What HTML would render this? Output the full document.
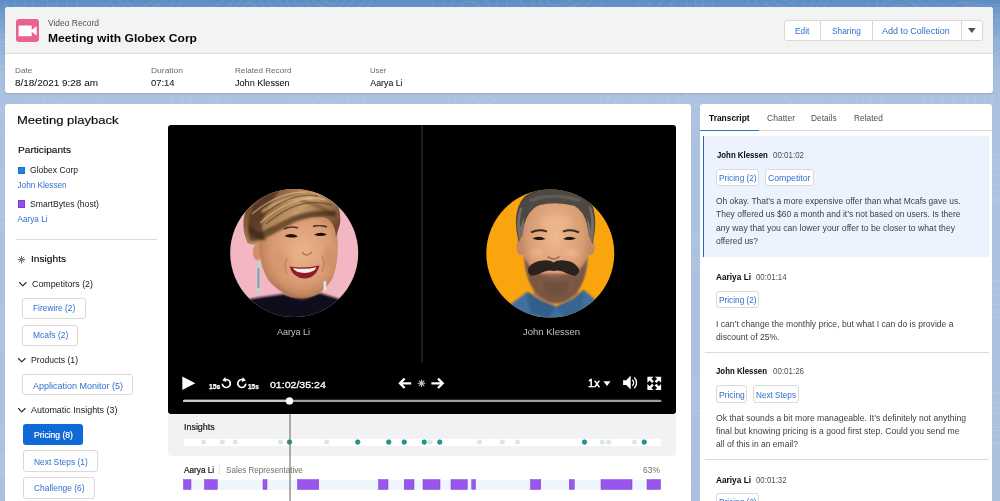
<!DOCTYPE html>
<html lang="en">
<head>
<meta charset="utf-8">
<title>Meeting with Globex Corp</title>
<style>
*{box-sizing:border-box;margin:0;padding:0}
html,body{width:1000px;height:501px;overflow:hidden}
body{position:relative;font-family:"Liberation Sans",sans-serif;background:linear-gradient(to bottom,#5d8cc1 0px,#6f9acc 12px,#8fb0d8 40px,#a6bedf 75px,#adc2e0 105px,#adc1df 100%)}
.abs,.t{position:absolute}
.t{white-space:pre;display:block;transform-origin:0 50%}
.card{position:absolute;background:#fff;border-radius:3px}
.btn{position:absolute;background:#fff;border:1px solid #dbd9d7;border-radius:3px}
.tag{position:absolute;background:#fff;border:1px solid #dbd9d7;border-radius:3px}
.hr{position:absolute;height:1px;background:#dddbda}
svg{position:absolute;overflow:visible}
</style>
</head>
<body>
<svg style="left:0;top:0" width="1000" height="501"><path d="M48.0 4.0Q47.5 5.7 46.4 7.1Q45.1 8.3 43.4 9.0Q41.8 10.1 40.0 10.5Q37.8 10.9 35.5 10.5Q34.6 8.8 34.2 6.8Q33.3 5.5 32.8 4.0Q32.8 2.3 33.2 0.7Q34.3 -0.9 35.8 -2.1Q37.9 -2.6 40.0 -2.4Q41.7 -1.8 43.1 -0.6Q45.4 -0.5 47.4 0.4Q48.0 2.1 48.0 4.0M57.1 4.0Q55.9 7.2 53.7 9.9Q50.8 12.2 47.3 13.4Q43.9 15.4 40.0 16.2Q35.2 17.0 30.5 16.3Q28.5 13.0 27.6 9.3Q25.7 6.9 24.5 4.0Q24.5 0.8 25.5 -2.2Q27.9 -5.3 31.0 -7.5Q35.5 -8.5 40.0 -8.0Q43.6 -6.9 46.7 -4.7Q51.4 -4.5 55.8 -2.8Q57.0 0.5 57.1 4.0M67.8 4.0Q65.7 8.5 62.3 12.1Q57.5 15.4 51.9 17.0Q46.3 19.9 40.0 20.9Q32.3 22.1 24.5 20.9Q21.4 16.5 19.9 11.3Q16.8 8.1 14.9 4.0Q15.0 -0.4 16.5 -4.6Q20.4 -8.9 25.5 -11.9Q32.7 -13.3 40.0 -12.5Q45.8 -11.1 51.0 -8.0Q58.6 -7.8 65.7 -5.4Q67.5 -0.8 67.8 4.0M77.9 4.0Q75.0 10.1 70.4 15.0Q63.8 19.5 56.2 21.6Q48.5 25.6 40.0 26.9Q29.5 28.6 18.9 26.9Q14.7 20.9 12.6 13.9Q8.4 9.5 5.8 4.0Q6.0 -2.0 8.0 -7.6Q13.3 -13.5 20.2 -17.5Q30.0 -19.5 40.0 -18.4Q48.0 -16.5 54.9 -12.2Q65.3 -12.1 75.0 -8.7Q77.5 -2.6 77.9 4.0M147.3 -6.0Q146.8 -4.8 146.0 -3.7Q144.7 -2.8 143.2 -2.3Q141.8 -1.2 140.0 -0.5Q138.0 -0.8 136.2 -1.7Q135.2 -2.7 134.5 -3.9Q133.4 -4.8 132.7 -6.0Q132.9 -7.3 133.4 -8.5Q134.5 -9.7 135.9 -10.6Q138.0 -10.6 140.0 -10.0Q141.8 -10.3 143.5 -10.0Q145.4 -9.6 147.1 -8.7Q147.4 -7.4 147.3 -6.0M157.6 -6.0Q156.7 -2.7 154.7 0.2Q151.6 2.6 147.8 3.9Q144.3 7.1 140.0 9.0Q135.2 8.1 130.8 5.6Q128.3 3.0 126.7 -0.4Q124.0 -2.8 122.2 -6.0Q122.6 -9.5 124.0 -12.8Q126.6 -16.1 130.1 -18.5Q135.2 -18.5 140.0 -16.9Q144.3 -17.6 148.5 -16.9Q153.2 -15.8 157.3 -13.3Q158.1 -9.7 157.6 -6.0M165.4 -6.0Q163.9 -1.5 161.2 2.2Q156.6 5.5 151.3 7.2Q146.2 11.4 140.0 13.9Q133.1 12.7 126.8 9.4Q123.2 5.9 120.8 1.5Q117.0 -1.8 114.4 -6.0Q115.0 -10.7 117.0 -14.9Q120.8 -19.5 125.8 -22.6Q133.1 -22.7 140.0 -20.5Q146.2 -21.4 152.3 -20.4Q159.0 -19.0 165.0 -15.7Q166.0 -10.9 165.4 -6.0M176.4 -6.0Q174.3 0.6 170.3 6.1Q163.8 10.9 156.1 13.4Q148.9 19.7 140.0 23.3Q130.0 21.5 121.1 16.7Q115.9 11.5 112.5 5.0Q107.1 0.2 103.4 -6.0Q104.2 -12.9 107.1 -19.2Q112.5 -25.8 119.6 -30.5Q130.1 -30.6 140.0 -27.4Q148.8 -28.7 157.6 -27.2Q167.2 -25.2 175.8 -20.3Q177.2 -13.2 176.4 -6.0M185.2 -6.0Q182.5 1.7 177.6 8.2Q169.5 13.9 160.0 16.7Q150.9 24.1 140.0 28.3Q127.7 26.3 116.6 20.6Q110.1 14.6 105.9 6.9Q99.2 1.4 94.5 -6.0Q95.6 -14.1 99.1 -21.5Q105.9 -29.3 114.7 -34.7Q127.7 -34.9 140.0 -31.0Q151.0 -32.7 161.9 -30.8Q173.8 -28.6 184.4 -22.8Q186.1 -14.5 185.2 -6.0M256.9 10.0Q257.4 12.0 257.3 14.1Q255.5 15.3 253.4 15.8Q251.8 16.5 250.0 16.7Q248.2 16.5 246.6 15.7Q244.7 15.2 242.9 14.0Q242.4 12.0 242.5 10.0Q243.4 8.3 244.8 7.1Q245.3 5.2 246.2 3.6Q248.0 2.8 250.0 2.6Q252.0 2.7 253.8 3.5Q254.9 5.1 255.4 6.9Q256.4 8.3 256.9 10.0M266.5 10.0Q267.4 13.1 267.4 16.4Q263.0 18.4 258.1 19.0Q254.2 20.3 250.0 20.4Q245.9 20.2 242.0 18.8Q237.4 18.2 233.2 16.2Q232.2 13.2 232.2 10.0Q234.6 7.3 237.7 5.5Q238.9 2.5 241.0 0.1Q245.4 -1.4 250.0 -1.5Q254.7 -1.5 259.1 -0.1Q261.4 2.3 262.9 5.3Q265.1 7.3 266.5 10.0M274.5 10.0Q276.0 15.0 275.8 20.2Q269.3 23.4 262.1 24.3Q256.2 26.4 250.0 26.5Q243.9 26.3 238.1 24.1Q231.2 23.0 225.0 19.9Q223.5 15.1 223.5 10.0Q227.0 5.7 231.7 2.8Q233.5 -1.9 236.6 -5.8Q243.1 -8.2 250.0 -8.3Q257.0 -8.3 263.6 -6.1Q267.0 -2.3 269.1 2.5Q272.4 5.8 274.5 10.0M285.8 10.0Q287.9 16.6 287.8 23.5Q278.2 27.8 267.7 29.0Q259.1 31.8 250.0 31.8Q241.0 31.6 232.6 28.6Q222.6 27.4 213.4 23.1Q211.3 16.7 211.3 10.0Q216.5 4.3 223.2 0.4Q225.9 -5.8 230.4 -11.0Q240.0 -14.2 250.0 -14.2Q260.2 -14.3 269.9 -11.3Q274.8 -6.3 278.0 0.0Q282.7 4.4 285.8 10.0M339.6 -2.0Q338.5 -0.6 337.1 0.4Q336.3 1.9 335.0 3.1Q332.6 4.2 330.0 4.4Q327.7 3.7 325.8 2.3Q323.8 1.8 322.0 0.7Q321.0 -0.5 320.5 -2.0Q320.3 -3.6 320.6 -5.2Q322.9 -6.3 325.5 -6.6Q327.7 -7.1 330.0 -6.8Q332.6 -7.6 335.4 -7.4Q337.2 -6.4 338.6 -4.9Q339.3 -3.5 339.6 -2.0M348.2 -2.0Q346.3 0.7 343.6 2.6Q342.0 5.5 339.6 7.8Q335.0 9.8 330.0 10.2Q325.7 8.8 322.0 6.1Q318.2 5.2 314.8 3.2Q312.9 0.8 311.8 -2.0Q311.5 -5.1 312.1 -8.1Q316.5 -10.2 321.4 -10.7Q325.7 -11.6 330.0 -11.2Q335.0 -12.6 340.2 -12.4Q343.6 -10.4 346.3 -7.5Q347.7 -4.9 348.2 -2.0M355.3 -2.0Q352.6 2.2 348.8 5.4Q346.8 10.0 343.3 13.7Q337.0 16.7 330.0 17.5Q323.9 15.2 318.9 11.0Q313.5 9.5 308.9 6.3Q306.2 2.5 304.8 -2.0Q304.2 -6.9 305.1 -11.7Q311.3 -14.9 318.1 -16.0Q324.0 -17.3 330.0 -16.7Q336.9 -18.8 344.1 -18.6Q349.0 -15.4 352.6 -10.9Q354.6 -6.6 355.3 -2.0M366.8 -2.0Q362.9 3.9 357.4 8.2Q354.3 14.6 349.4 19.8Q340.1 24.0 330.0 25.1Q321.2 21.9 313.8 16.1Q306.0 14.0 299.3 9.5Q295.4 4.2 293.3 -2.0Q292.5 -8.8 293.8 -15.5Q302.8 -20.0 312.7 -21.4Q321.3 -23.3 330.0 -22.4Q340.1 -25.4 350.6 -25.1Q357.6 -20.7 362.9 -14.3Q365.8 -8.5 366.8 -2.0M374.3 -2.0Q369.7 5.4 363.0 11.0Q359.4 19.1 353.4 25.7Q342.2 31.0 330.0 32.5Q319.3 28.3 310.5 21.1Q301.1 18.2 293.0 12.6Q288.2 5.9 285.8 -2.0Q284.7 -10.7 286.4 -19.2Q297.2 -24.8 309.1 -26.7Q319.5 -29.0 330.0 -28.0Q342.1 -31.7 354.8 -31.4Q363.3 -25.7 369.7 -17.7Q373.2 -10.2 374.3 -2.0M478.2 8.0Q477.7 9.7 476.7 11.3Q475.4 12.5 473.7 13.3Q472.1 15.0 470.0 16.1Q467.8 15.4 465.9 14.0Q464.6 12.7 463.7 11.0Q462.5 9.7 461.8 8.0Q461.9 6.1 462.5 4.4Q463.8 2.7 465.5 1.4Q467.8 1.5 470.0 2.3Q472.0 1.9 474.1 2.1Q476.2 2.8 477.9 4.1Q478.4 6.1 478.2 8.0M488.7 8.0Q487.5 10.9 485.4 13.3Q482.2 15.6 478.4 16.7Q474.6 19.6 470.0 21.2Q465.0 20.2 460.6 17.8Q457.7 15.7 455.7 12.9Q453.0 10.8 451.1 8.0Q451.5 4.9 452.9 2.1Q455.9 -0.9 459.6 -2.7Q464.9 -2.8 470.0 -1.3Q474.6 -2.2 479.4 -1.7Q484.1 -0.7 488.2 1.7Q489.0 4.8 488.7 8.0M497.2 8.0Q495.5 12.7 492.4 16.6Q487.8 20.1 482.2 22.0Q476.7 26.6 470.0 29.2Q462.7 27.6 456.3 23.7Q452.1 20.4 449.2 16.0Q445.3 12.5 442.6 8.0Q443.1 3.0 445.1 -1.5Q449.4 -6.2 454.9 -9.3Q462.6 -9.3 470.0 -7.0Q476.7 -8.4 483.6 -7.6Q490.5 -5.9 496.5 -2.1Q497.6 2.9 497.2 8.0M507.3 8.0Q505.0 14.4 500.8 19.7Q494.4 24.5 486.8 27.1Q479.2 33.4 470.0 37.0Q460.0 34.7 451.2 29.5Q445.4 25.0 441.4 18.9Q436.0 14.2 432.3 8.0Q433.1 1.2 435.8 -5.0Q441.7 -11.4 449.3 -15.6Q459.9 -15.7 470.0 -12.4Q479.3 -14.3 488.7 -13.3Q498.1 -11.0 506.4 -5.8Q508.0 1.0 507.3 8.0M571.8 -8.0Q570.7 -6.6 569.2 -5.6Q567.2 -4.6 565.0 -4.1Q562.6 -3.3 560.0 -3.3Q556.8 -2.6 553.5 -3.0Q552.2 -4.2 551.4 -5.8Q550.5 -6.8 550.0 -8.0Q549.9 -9.3 550.2 -10.5Q552.0 -11.8 554.1 -12.5Q557.0 -13.2 560.0 -13.0Q562.3 -12.6 564.4 -11.4Q567.4 -11.5 570.3 -10.6Q571.3 -9.4 571.8 -8.0M579.2 -8.0Q577.5 -4.6 574.8 -1.8Q571.8 0.7 568.1 2.2Q564.2 3.9 560.0 4.3Q554.8 5.6 549.5 5.1Q547.2 1.8 546.0 -2.2Q544.5 -4.9 543.8 -8.0Q543.5 -11.3 544.2 -14.6Q546.9 -17.8 550.5 -19.9Q555.1 -21.3 560.0 -21.2Q563.9 -19.7 567.2 -17.0Q572.1 -16.7 576.6 -14.9Q578.5 -11.7 579.2 -8.0M587.8 -8.0Q585.3 -3.1 581.5 0.7Q577.1 4.3 571.8 6.3Q566.1 8.8 560.0 9.4Q552.5 11.1 544.8 10.5Q541.5 5.7 539.8 0.2Q537.5 -3.6 536.6 -8.0Q536.1 -12.7 537.1 -17.3Q541.1 -21.8 546.2 -24.8Q553.0 -26.8 560.0 -26.6Q565.7 -24.5 570.4 -20.7Q577.5 -20.3 584.1 -17.8Q586.7 -13.2 587.8 -8.0M597.0 -8.0Q593.8 -1.4 588.6 3.9Q582.8 8.7 575.7 11.6Q568.2 14.9 560.0 15.7Q550.0 18.0 539.7 17.2Q535.2 10.7 533.0 3.2Q530.0 -2.1 528.7 -8.0Q528.1 -14.4 529.5 -20.6Q534.7 -26.7 541.6 -30.9Q550.6 -33.6 560.0 -33.3Q567.6 -30.4 573.9 -25.3Q583.3 -24.8 592.2 -21.3Q595.7 -15.1 597.0 -8.0M610.0 -8.0Q605.5 0.2 598.6 6.6Q590.7 12.8 581.2 16.1Q571.0 20.3 560.0 21.2Q546.5 24.3 532.7 23.1Q526.7 15.2 523.6 5.8Q519.6 -0.6 517.8 -8.0Q517.1 -15.9 518.9 -23.6Q526.0 -31.2 535.2 -36.2Q547.3 -39.7 560.0 -39.2Q570.2 -35.8 578.7 -29.3Q591.4 -28.8 603.4 -24.4Q608.0 -16.7 610.0 -8.0M687.0 4.0Q687.9 5.8 688.2 7.8Q686.4 9.2 684.3 10.0Q682.2 10.4 680.0 10.0Q678.0 10.0 676.1 9.4Q674.2 8.7 672.7 7.4Q671.3 5.9 670.5 4.0Q672.0 2.3 673.9 1.2Q674.8 -0.3 676.1 -1.4Q677.9 -2.6 680.0 -3.1Q682.3 -2.9 684.3 -2.0Q685.9 -0.8 687.0 0.8Q687.2 2.4 687.0 4.0M695.5 4.0Q697.4 7.3 698.2 11.0Q694.3 13.8 689.6 15.1Q684.8 15.9 680.0 15.2Q675.5 15.3 671.3 14.1Q667.2 12.8 663.7 10.3Q660.7 7.5 658.8 4.0Q662.2 0.8 666.4 -1.2Q668.4 -4.0 671.3 -6.1Q675.4 -8.4 680.0 -9.3Q685.0 -9.0 689.6 -7.1Q693.0 -5.0 695.5 -2.0Q696.0 1.0 695.5 4.0M702.7 4.0Q705.5 9.1 706.6 14.9Q700.9 19.1 694.1 21.3Q687.0 22.5 680.0 21.4Q673.5 21.5 667.3 19.7Q661.3 17.6 656.2 13.7Q651.8 9.4 649.0 4.0Q653.9 -1.0 660.1 -4.1Q663.1 -8.5 667.3 -11.7Q673.2 -15.2 680.0 -16.6Q687.3 -16.1 694.1 -13.3Q699.0 -10.0 702.7 -5.3Q703.4 -0.6 702.7 4.0M711.9 4.0Q715.8 10.4 717.5 17.7Q709.3 23.1 699.8 25.7Q689.9 27.4 680.0 25.9Q670.8 26.2 662.1 23.7Q653.7 21.2 646.5 16.3Q640.5 10.9 636.4 4.0Q643.4 -2.4 652.0 -6.2Q656.3 -11.8 662.1 -15.7Q670.5 -20.3 680.0 -22.0Q690.3 -21.4 699.8 -17.8Q706.7 -13.7 711.9 -7.7Q712.9 -1.8 711.9 4.0M796.9 -4.0Q796.4 -2.4 795.4 -1.1Q795.1 0.9 794.2 2.6Q792.1 3.1 790.0 2.8Q788.2 2.2 786.8 1.1Q785.2 0.4 783.9 -0.8Q782.9 -2.3 782.5 -4.0Q782.4 -5.9 782.9 -7.7Q784.8 -8.6 787.0 -8.8Q788.4 -9.8 790.0 -10.4Q792.0 -10.7 794.0 -10.3Q795.5 -9.0 796.4 -7.4Q797.0 -5.7 796.9 -4.0M807.8 -4.0Q806.4 -0.8 804.0 1.9Q803.0 6.0 800.8 9.6Q795.4 10.6 790.0 9.9Q785.6 8.8 781.7 6.4Q777.7 5.1 774.3 2.6Q771.9 -0.4 770.6 -4.0Q770.6 -7.9 771.8 -11.6Q776.8 -13.5 782.2 -13.8Q785.8 -16.1 790.0 -17.1Q795.2 -17.8 800.3 -16.9Q803.9 -14.4 806.5 -10.9Q807.7 -7.6 807.8 -4.0M817.1 -4.0Q814.8 0.2 811.3 3.5Q809.6 8.9 806.4 13.5Q798.3 15.0 790.0 13.9Q783.3 12.7 777.3 9.4Q771.3 7.9 766.1 4.5Q762.7 0.7 760.6 -4.0Q760.6 -9.0 762.3 -13.8Q770.0 -16.5 778.1 -16.6Q783.7 -19.7 790.0 -20.8Q797.8 -22.0 805.6 -20.6Q811.0 -17.5 815.1 -12.9Q816.8 -8.6 817.1 -4.0M824.1 -4.0Q821.3 1.9 816.7 6.6Q814.8 14.1 810.7 20.7Q800.4 22.6 790.0 21.2Q781.6 19.4 774.1 15.0Q766.5 12.6 760.0 8.0Q755.5 2.5 753.0 -4.0Q753.0 -11.1 755.2 -17.9Q764.8 -21.4 775.1 -21.8Q782.1 -26.0 790.0 -27.8Q799.8 -29.2 809.6 -27.5Q816.5 -23.0 821.5 -16.6Q823.8 -10.5 824.1 -4.0M831.3 -4.0Q827.9 3.2 822.4 9.0Q820.1 18.1 815.0 26.1Q802.6 28.4 790.0 26.8Q779.8 24.5 770.7 19.2Q761.5 16.2 753.6 10.6Q748.2 4.0 745.1 -4.0Q745.1 -12.7 747.8 -20.9Q759.5 -25.2 771.9 -25.7Q780.4 -30.8 790.0 -33.0Q801.9 -34.7 813.8 -32.6Q822.1 -27.1 828.2 -19.3Q831.0 -11.9 831.3 -4.0M908.7 10.0Q907.7 11.3 906.4 12.3Q905.1 13.3 903.6 13.9Q901.8 14.3 900.0 14.2Q898.0 14.7 895.9 14.5Q894.2 13.8 892.9 12.6Q893.1 11.2 893.8 10.0Q893.4 8.8 893.5 7.6Q894.6 6.5 896.1 5.8Q898.0 5.0 900.0 4.9Q901.8 5.4 903.3 6.4Q904.7 6.9 905.9 7.9Q907.5 8.7 908.7 10.0M922.2 10.0Q919.7 13.2 916.3 15.4Q913.0 17.8 909.1 19.0Q904.6 20.2 900.0 19.9Q894.8 21.0 889.5 20.4Q885.3 18.8 881.9 16.0Q882.5 12.8 884.1 10.0Q883.2 7.3 883.3 4.5Q886.3 1.8 890.1 0.2Q894.9 -1.7 900.0 -1.9Q904.5 -0.9 908.5 1.6Q912.0 2.8 915.0 5.1Q919.0 7.0 922.2 10.0M930.3 10.0Q927.0 15.0 922.3 18.7Q917.8 22.5 912.4 24.6Q906.3 26.3 900.0 26.0Q892.9 27.6 885.6 26.9Q879.9 24.1 875.4 19.7Q876.1 14.6 878.3 10.0Q877.1 5.6 877.2 1.1Q881.3 -3.2 886.4 -6.0Q893.0 -8.7 900.0 -9.4Q906.3 -7.5 911.6 -3.7Q916.5 -1.6 920.4 2.0Q926.0 5.2 930.3 10.0M943.7 10.0Q938.8 16.5 932.1 21.2Q925.6 26.2 917.9 28.8Q909.1 31.1 900.0 30.6Q889.7 32.8 879.3 31.8Q871.1 28.3 864.5 22.4Q865.6 15.9 868.7 10.0Q867.0 4.4 867.2 -1.5Q873.1 -7.1 880.4 -10.5Q889.9 -14.3 900.0 -14.9Q909.0 -12.6 916.8 -7.6Q923.7 -5.0 929.4 -0.3Q937.4 3.7 943.7 10.0M994.2 30.0Q993.6 31.8 992.6 33.4Q991.0 34.7 989.1 35.5Q987.3 37.3 985.0 38.4Q982.5 37.7 980.4 36.3Q978.9 34.9 978.0 33.1Q976.6 31.7 975.8 30.0Q975.9 28.1 976.6 26.2Q978.0 24.4 979.9 23.1Q982.5 23.2 985.0 24.1Q987.3 23.6 989.6 23.9Q991.9 24.6 993.9 26.0Q994.4 28.0 994.2 30.0M1004.2 30.0Q1003.0 33.4 1000.9 36.2Q997.5 38.8 993.6 40.1Q989.7 43.4 985.0 45.3Q979.8 44.2 975.3 41.5Q972.3 39.0 970.3 35.7Q967.5 33.2 965.6 30.0Q966.0 26.4 967.5 23.1Q970.4 19.7 974.3 17.4Q979.8 17.4 985.0 19.1Q989.7 18.2 994.5 18.8Q999.4 20.0 1003.7 22.7Q1004.6 26.3 1004.2 30.0M1011.0 30.0Q1009.4 34.6 1006.5 38.4Q1002.0 41.9 996.7 43.7Q991.4 48.2 985.0 50.8Q978.0 49.2 971.8 45.5Q967.9 42.2 965.1 37.8Q961.3 34.4 958.8 30.0Q959.3 25.1 961.3 20.7Q965.3 16.1 970.5 13.0Q978.0 13.0 985.0 15.3Q991.4 14.0 997.9 14.8Q1004.6 16.4 1010.4 20.0Q1011.5 25.0 1011.0 30.0M1020.3 30.0Q1018.2 36.5 1014.2 42.0Q1008.1 46.8 1000.8 49.4Q993.7 55.7 985.0 59.4Q975.5 57.1 967.1 52.0Q961.7 47.2 958.1 41.0Q952.9 36.2 949.4 30.0Q950.1 23.1 952.8 16.8Q958.2 10.3 965.4 5.9Q975.4 5.9 985.0 9.1Q993.7 7.4 1002.5 8.4Q1011.6 10.8 1019.4 15.9Q1021.0 22.9 1020.3 30.0M1031.6 30.0Q1028.7 37.5 1023.5 43.8Q1015.4 49.5 1005.9 52.4Q996.4 59.8 985.0 63.9Q972.5 61.5 961.3 55.3Q954.4 50.0 949.4 42.7Q942.7 37.3 938.0 30.0Q939.0 22.0 942.4 14.8Q949.7 7.2 959.1 2.2Q972.3 2.0 985.0 6.0Q996.5 3.7 1008.2 5.2Q1020.0 7.7 1030.5 13.8Q1032.4 21.8 1031.6 30.0M69.2 98.0Q68.2 99.5 66.8 100.6Q65.4 101.7 63.8 102.3Q61.9 102.8 60.0 102.7Q57.8 103.2 55.6 103.0Q53.9 102.2 52.6 100.8Q52.7 99.3 53.4 98.0Q53.0 96.7 53.0 95.4Q54.3 94.1 55.9 93.3Q57.9 92.5 60.0 92.3Q61.9 92.9 63.5 94.0Q65.0 94.6 66.3 95.6Q68.0 96.6 69.2 98.0M80.9 98.0Q78.6 101.5 75.3 104.0Q72.3 106.6 68.6 108.2Q64.4 109.3 60.0 109.1Q55.1 110.3 50.0 109.9Q46.2 107.8 43.2 104.6Q43.6 101.2 45.0 98.0Q44.1 94.9 44.2 91.8Q47.0 88.8 50.6 86.9Q55.1 85.0 60.0 84.6Q64.3 85.9 67.9 88.6Q71.4 90.0 74.3 92.4Q78.0 94.7 80.9 98.0M90.3 98.0Q86.9 102.7 82.2 106.1Q77.8 109.7 72.5 111.7Q66.3 113.3 60.0 112.9Q52.8 114.6 45.5 114.0Q40.0 111.2 35.6 106.9Q36.2 102.3 38.2 98.0Q37.0 93.9 37.1 89.6Q41.2 85.6 46.4 83.1Q53.0 80.4 60.0 79.9Q66.2 81.7 71.5 85.4Q76.5 87.1 80.7 90.4Q86.1 93.4 90.3 98.0M101.5 98.0Q96.9 104.7 90.4 109.6Q84.4 114.7 77.1 117.6Q68.7 119.8 60.0 119.3Q50.2 121.7 40.1 120.8Q32.5 116.9 26.6 110.8Q27.4 104.1 30.2 98.0Q28.4 92.1 28.6 86.0Q34.3 80.3 41.4 76.7Q50.3 72.9 60.0 72.1Q68.5 74.8 75.8 79.9Q82.7 82.5 88.4 87.2Q95.8 91.5 101.5 98.0M210.8 100.0Q209.7 101.6 208.1 102.9Q207.1 104.6 205.6 105.9Q202.9 107.2 200.0 107.6Q197.4 106.7 195.2 105.0Q193.0 104.4 191.0 103.1Q189.9 101.7 189.2 100.0Q189.0 98.1 189.4 96.3Q191.9 95.0 194.8 94.5Q197.4 94.1 200.0 94.5Q202.9 93.6 206.0 93.7Q208.1 94.8 209.8 96.6Q210.6 98.2 210.8 100.0M218.1 100.0Q216.3 103.0 213.6 105.4Q211.9 108.6 209.3 111.1Q204.9 113.4 200.0 114.3Q195.6 112.5 192.0 109.5Q188.2 108.3 185.0 105.9Q183.0 103.2 182.0 100.0Q181.6 96.5 182.3 93.0Q186.5 90.6 191.3 89.7Q195.6 88.9 200.0 89.6Q204.9 88.0 210.1 88.1Q213.6 90.3 216.3 93.6Q217.7 96.6 218.1 100.0M227.8 100.0Q224.9 104.2 220.9 107.2Q218.2 111.6 214.3 114.9Q207.5 118.2 200.0 119.3Q193.4 117.0 187.7 112.8Q182.0 111.2 177.0 108.0Q174.1 104.4 172.4 100.0Q171.9 95.3 172.9 90.6Q179.4 87.2 186.6 86.1Q193.3 84.9 200.0 86.0Q207.6 83.7 215.4 83.9Q220.8 86.9 225.0 91.3Q227.1 95.4 227.8 100.0M338.7 96.0Q339.8 98.0 340.2 100.1Q337.9 101.6 335.2 102.3Q332.6 102.8 330.0 102.6Q327.6 102.6 325.2 101.8Q322.8 101.1 320.8 99.7Q319.3 98.1 318.5 96.0Q320.3 94.2 322.7 93.0Q323.6 91.3 325.0 90.0Q327.4 88.7 330.0 88.3Q332.8 88.5 335.3 89.5Q337.1 90.8 338.3 92.6Q338.8 94.3 338.7 96.0M346.5 96.0Q348.5 99.2 349.4 102.8Q344.9 105.3 339.8 106.3Q334.9 107.3 330.0 106.8Q325.4 106.9 320.9 105.5Q316.5 104.5 312.6 102.1Q309.9 99.4 308.2 96.0Q311.8 92.9 316.1 91.1Q318.0 88.2 320.6 86.1Q325.1 84.0 330.0 83.4Q335.2 83.6 340.1 85.3Q343.4 87.4 345.8 90.4Q346.6 93.2 346.5 96.0M352.9 96.0Q355.7 100.6 356.8 105.8Q350.6 109.4 343.6 110.8Q336.8 112.3 330.0 111.5Q323.6 111.6 317.4 109.7Q311.2 108.2 305.8 104.8Q302.1 100.9 299.7 96.0Q304.7 91.6 310.8 89.0Q313.3 84.9 317.0 81.7Q323.2 78.8 330.0 77.9Q337.2 78.1 344.0 80.6Q348.6 83.7 351.9 88.0Q353.1 91.9 352.9 96.0M361.5 96.0Q365.2 102.2 366.9 109.2Q358.3 114.1 348.6 116.0Q339.4 118.0 330.0 117.0Q321.2 117.1 312.7 114.6Q304.2 112.5 296.8 107.9Q291.7 102.6 288.4 96.0Q295.2 90.1 303.6 86.5Q307.1 81.0 312.1 76.7Q320.6 72.7 330.0 71.6Q339.9 71.9 349.3 75.3Q355.5 79.4 360.1 85.2Q361.7 90.5 361.5 96.0M478.6 102.0Q478.2 103.5 477.4 104.7Q475.6 105.7 473.7 106.0Q471.9 106.7 470.0 106.7Q468.0 106.8 466.1 106.2Q464.0 105.9 462.0 104.9Q462.2 103.4 463.0 102.0Q463.2 100.8 463.8 99.7Q464.6 98.4 465.8 97.4Q467.9 96.7 470.0 96.7Q472.1 96.8 474.0 97.6Q475.0 98.7 475.6 100.0Q477.3 100.7 478.6 102.0M489.1 102.0Q488.2 105.1 486.3 107.8Q482.5 109.9 478.1 110.6Q474.2 112.0 470.0 112.0Q465.7 112.2 461.5 111.1Q456.7 110.4 452.3 108.3Q452.8 105.0 454.4 102.0Q455.0 99.4 456.3 97.1Q458.1 94.3 460.8 92.2Q465.3 90.7 470.0 90.7Q474.6 90.9 478.8 92.6Q481.0 94.8 482.4 97.6Q486.1 99.3 489.1 102.0M497.5 102.0Q496.3 106.9 493.5 111.2Q488.0 114.4 481.7 115.8Q476.0 117.8 470.0 117.9Q463.7 118.1 457.7 116.4Q450.7 115.3 444.5 112.0Q445.2 106.7 447.5 102.0Q448.3 97.9 450.2 94.3Q452.8 89.8 456.7 86.4Q463.2 84.1 470.0 84.0Q476.6 84.5 482.7 87.1Q485.9 90.6 487.8 95.0Q493.2 97.7 497.5 102.0M649.6 97.0Q648.8 98.4 647.7 99.4Q645.9 100.4 644.0 100.7Q642.0 101.3 640.0 101.2Q637.8 101.5 635.7 101.0Q633.5 100.7 631.5 99.7Q631.9 98.2 632.7 97.0Q632.7 95.9 633.0 94.8Q634.1 93.6 635.5 92.8Q637.7 92.1 640.0 92.1Q642.2 92.3 644.1 93.1Q645.3 93.9 646.1 95.1Q648.0 95.8 649.6 97.0M662.2 97.0Q660.5 100.6 657.7 103.5Q653.7 106.0 649.2 107.1Q644.7 108.5 640.0 108.4Q635.0 109.0 630.1 107.9Q624.9 106.8 620.3 104.2Q621.2 100.4 623.2 97.0Q623.1 94.0 623.9 91.1Q626.4 88.0 629.7 85.7Q634.7 83.9 640.0 83.7Q645.0 84.4 649.6 86.5Q652.3 88.8 654.1 91.8Q658.6 93.8 662.2 97.0M669.1 97.0Q666.9 102.0 663.2 106.0Q658.1 109.5 652.1 111.1Q646.2 113.0 640.0 112.9Q633.4 113.6 626.9 112.2Q620.1 110.7 614.2 107.0Q615.3 101.7 617.9 97.0Q617.8 92.8 618.9 88.8Q622.1 84.4 626.5 81.2Q633.0 78.7 640.0 78.4Q646.6 79.4 652.5 82.4Q656.1 85.6 658.5 89.8Q664.4 92.5 669.1 97.0M680.3 97.0Q677.2 103.8 672.1 109.4Q665.0 114.1 656.7 116.3Q648.6 118.9 640.0 118.8Q630.9 119.8 621.9 117.8Q612.6 115.7 604.3 110.7Q605.8 103.5 609.5 97.0Q609.3 91.3 610.8 85.8Q615.3 79.8 621.3 75.4Q630.4 72.0 640.0 71.6Q649.1 72.9 657.3 77.0Q662.3 81.4 665.6 87.1Q673.7 90.9 680.3 97.0M689.5 97.0Q685.8 105.9 679.5 113.3Q670.7 119.4 660.5 122.4Q650.5 125.7 640.0 125.7Q628.8 126.8 617.8 124.4Q606.2 121.5 596.1 115.1Q597.9 105.5 602.5 97.0Q602.2 89.5 604.2 82.2Q609.5 74.4 617.0 68.6Q628.1 64.3 640.0 63.6Q651.2 65.4 661.3 70.7Q667.5 76.5 671.5 84.0Q681.5 89.1 689.5 97.0M708.8 110.0Q709.1 111.7 708.9 113.5Q706.7 114.5 704.2 114.9Q702.2 115.6 700.0 115.7Q697.9 115.6 695.8 114.8Q693.4 114.5 691.2 113.4Q690.8 111.7 691.0 110.0Q692.1 108.5 693.6 107.5Q694.2 105.9 695.3 104.5Q697.6 103.8 700.0 103.7Q702.4 103.8 704.7 104.5Q705.9 105.8 706.5 107.5Q707.8 108.6 708.8 110.0M716.1 110.0Q716.8 113.1 716.4 116.3Q712.3 118.2 707.7 118.8Q704.0 120.2 700.0 120.3Q696.1 120.1 692.3 118.8Q687.8 118.2 683.7 116.2Q683.1 113.1 683.5 110.0Q685.4 107.4 688.1 105.5Q689.3 102.5 691.4 100.1Q695.6 98.7 700.0 98.7Q704.5 98.7 708.7 100.1Q710.8 102.5 712.0 105.4Q714.5 107.4 716.1 110.0M726.1 110.0Q727.1 115.0 726.5 120.0Q719.8 123.2 712.4 124.1Q706.4 126.3 700.0 126.4Q693.6 126.2 687.6 124.0Q680.4 123.1 673.8 119.9Q672.7 115.0 673.3 110.0Q676.5 105.8 680.8 102.7Q682.8 98.0 686.0 94.2Q692.8 91.9 700.0 91.8Q707.2 91.8 714.0 94.1Q717.4 97.9 719.4 102.6Q723.3 105.8 726.1 110.0M846.4 96.0Q847.0 97.2 847.2 98.5Q845.9 99.7 844.2 100.4Q842.1 100.6 840.0 100.1Q838.1 100.3 836.3 99.8Q834.8 99.3 833.5 98.3Q832.1 97.3 831.1 96.0Q832.4 94.7 834.0 93.9Q835.2 93.0 836.6 92.5Q838.2 91.5 840.0 91.0Q842.1 91.1 844.0 91.9Q845.5 92.6 846.7 93.7Q846.7 94.9 846.4 96.0M856.6 96.0Q858.1 99.1 858.7 102.6Q855.2 105.7 851.0 107.6Q845.4 108.2 840.0 106.9Q835.2 107.2 830.5 106.0Q826.5 104.6 823.1 102.0Q819.5 99.5 816.9 96.0Q820.2 92.7 824.4 90.5Q827.5 88.0 831.2 86.7Q835.3 84.0 840.0 82.8Q845.3 83.1 850.3 85.1Q854.2 86.9 857.4 89.9Q857.5 93.0 856.6 96.0M861.4 96.0Q863.5 100.7 864.1 105.9Q859.8 110.4 854.2 113.4Q847.0 114.0 840.0 112.4Q833.8 112.7 827.8 111.0Q822.5 108.8 818.1 104.9Q813.5 101.1 810.2 96.0Q814.3 91.1 819.8 87.7Q823.7 84.2 828.6 82.0Q833.8 78.2 840.0 76.1Q847.0 76.8 853.3 79.6Q858.5 82.5 862.4 86.8Q862.7 91.5 861.4 96.0M868.5 96.0Q871.4 102.3 872.1 109.1Q866.3 115.2 858.9 119.2Q849.4 120.0 840.0 117.8Q831.7 118.2 823.7 116.0Q816.6 112.9 810.8 107.9Q804.6 102.8 800.3 96.0Q805.8 89.5 813.1 85.0Q818.3 80.3 824.8 77.4Q831.8 72.3 840.0 69.6Q849.3 70.5 857.8 74.2Q864.6 78.1 869.9 83.8Q870.2 90.0 868.5 96.0M879.2 96.0Q883.1 104.1 884.2 112.9Q876.2 120.9 866.0 125.9Q852.9 127.1 840.0 124.1Q828.6 124.7 817.6 121.8Q807.9 118.0 799.9 111.3Q791.4 104.8 785.4 96.0Q793.0 87.5 802.9 81.8Q810.3 75.6 819.1 72.0Q828.8 65.3 840.0 61.9Q852.7 63.0 864.5 67.9Q873.8 72.7 881.2 80.3Q881.4 88.3 879.2 96.0M967.5 100.0Q967.1 101.4 966.2 102.5Q965.8 104.2 964.8 105.7Q962.4 106.0 960.0 105.5Q958.1 105.3 956.3 104.4Q954.6 103.8 953.2 102.7Q952.1 101.5 951.4 100.0Q951.6 98.4 952.3 96.9Q954.4 96.1 956.7 96.0Q958.2 94.9 960.0 94.3Q962.2 94.2 964.4 94.7Q966.0 95.7 967.2 97.1Q967.6 98.5 967.5 100.0M975.5 100.0Q974.7 103.1 972.9 105.7Q972.0 109.7 969.9 113.1Q964.9 113.7 960.0 112.6Q956.0 112.0 952.4 110.1Q948.9 108.7 946.0 106.2Q943.6 103.4 942.2 100.0Q942.5 96.3 944.0 92.9Q948.5 91.2 953.2 90.9Q956.3 88.4 960.0 87.0Q964.6 86.7 969.1 87.9Q972.4 90.2 974.9 93.4Q975.7 96.6 975.5 100.0M985.3 100.0Q983.8 104.6 981.0 108.4Q979.4 114.3 976.0 119.3Q968.0 120.2 960.0 118.6Q953.5 117.7 947.6 114.9Q941.9 112.8 937.2 109.1Q933.4 105.1 931.0 100.0Q931.7 94.6 934.0 89.6Q941.2 86.9 948.9 86.7Q954.0 82.9 960.0 80.9Q967.5 80.4 974.8 82.3Q980.1 85.5 984.2 90.3Q985.5 95.1 985.3 100.0M992.9 100.0Q991.0 105.6 987.4 110.4Q985.2 117.6 980.9 123.7Q970.4 124.9 960.0 122.8Q951.6 121.9 943.9 118.3Q936.5 115.9 930.3 111.2Q925.4 106.3 922.2 100.0Q923.2 93.3 926.2 87.2Q935.6 83.8 945.6 83.6Q952.2 78.9 960.0 76.5Q969.7 75.8 979.2 78.2Q986.1 82.1 991.5 88.1Q993.1 93.9 992.9 100.0M9.2 60.0Q9.9 61.8 10.1 63.7Q8.4 65.6 6.2 66.9Q3.1 67.1 0.0 66.4Q-2.7 66.5 -5.2 65.8Q-7.4 65.0 -9.3 63.5Q-11.3 62.0 -12.7 60.0Q-11.1 58.0 -8.9 56.7Q-7.0 55.4 -4.8 54.7Q-2.6 53.1 -0.0 52.3Q3.0 52.5 5.7 53.6Q7.9 54.7 9.7 56.4Q9.7 58.2 9.2 60.0M16.2 60.0Q17.5 63.3 17.7 66.9Q14.7 70.3 10.9 72.7Q5.4 73.1 0.0 71.7Q-4.7 72.0 -9.2 70.7Q-13.1 69.1 -16.3 66.3Q-19.8 63.6 -22.3 60.0Q-19.4 56.4 -15.6 53.9Q-12.3 51.5 -8.4 50.2Q-4.5 47.4 -0.0 45.8Q5.2 46.3 10.0 48.3Q13.9 50.3 17.0 53.4Q17.1 56.8 16.2 60.0M23.5 60.0Q25.3 64.4 25.7 69.1Q21.4 73.8 15.8 76.8Q7.8 77.4 0.0 75.5Q-6.8 76.0 -13.4 74.2Q-19.0 72.1 -23.7 68.4Q-28.7 64.9 -32.4 60.0Q-28.2 55.2 -22.7 51.9Q-17.8 48.7 -12.2 47.1Q-6.5 43.2 -0.0 41.2Q7.6 41.7 14.6 44.5Q20.2 47.0 24.8 51.2Q24.8 55.7 23.5 60.0M30.3 60.0Q32.7 66.0 33.2 72.5Q27.6 78.8 20.4 83.1Q10.1 83.8 0.0 81.3Q-8.8 81.8 -17.3 79.5Q-24.5 76.6 -30.5 71.5Q-37.1 66.7 -41.8 60.0Q-36.5 53.5 -29.3 48.9Q-23.0 44.5 -15.7 42.3Q-8.5 37.0 -0.0 34.2Q9.8 34.9 18.8 38.7Q26.1 42.3 31.9 48.0Q32.1 54.1 30.3 60.0M9.4 200.0Q9.4 201.5 9.0 203.0Q7.2 204.0 5.3 204.3Q3.7 205.0 2.0 205.1Q0.3 205.0 -1.4 204.4Q-3.4 204.1 -5.2 203.1Q-5.3 201.5 -4.8 200.0Q-4.3 198.7 -3.4 197.7Q-2.8 196.2 -1.8 195.1Q0.0 194.4 2.0 194.4Q3.9 194.5 5.7 195.2Q6.6 196.4 7.1 197.8Q8.4 198.7 9.4 200.0M19.8 200.0Q19.8 203.6 18.7 207.1Q14.6 209.3 10.0 210.2Q6.1 211.7 2.0 211.9Q-2.2 211.8 -6.1 210.4Q-10.9 209.6 -15.3 207.4Q-15.4 203.6 -14.2 200.0Q-13.0 197.0 -10.8 194.5Q-9.5 191.2 -7.1 188.4Q-2.7 186.8 2.0 186.8Q6.6 187.0 10.9 188.6Q13.1 191.4 14.2 194.8Q17.4 196.9 19.8 200.0M32.2 200.0Q32.0 205.2 30.2 210.1Q23.2 213.4 15.5 214.4Q8.9 216.7 2.0 216.9Q-5.0 216.9 -11.7 214.7Q-19.8 213.8 -27.3 210.5Q-27.2 205.1 -25.5 200.0Q-23.2 195.7 -19.7 192.2Q-17.2 187.4 -13.4 183.5Q-5.9 181.1 2.0 181.2Q9.8 181.3 17.1 183.8Q20.6 187.8 22.7 192.6Q28.0 195.5 32.2 200.0M41.5 200.0Q41.4 207.4 38.9 214.4Q29.8 219.0 19.6 220.6Q11.1 223.8 2.0 224.1Q-7.2 224.0 -16.0 221.0Q-26.6 219.6 -36.3 214.9Q-36.3 207.3 -34.0 200.0Q-31.1 193.9 -26.5 188.9Q-23.3 182.0 -18.1 176.5Q-8.3 173.2 2.0 173.2Q12.2 173.5 21.8 176.9Q26.4 182.6 29.1 189.5Q36.1 193.7 41.5 200.0M7.9 330.0Q8.5 331.5 8.6 333.0Q6.5 334.0 4.1 334.3Q2.1 334.9 0.0 334.9Q-2.0 334.8 -4.0 334.2Q-6.2 333.9 -8.1 332.9Q-8.8 331.5 -9.1 330.0Q-7.7 328.7 -6.0 327.9Q-5.4 326.5 -4.4 325.4Q-2.3 324.6 -0.0 324.5Q2.3 324.5 4.5 325.2Q5.7 326.3 6.5 327.7Q7.4 328.7 7.9 330.0M15.7 330.0Q17.0 333.1 17.2 336.5Q12.9 338.6 8.1 339.3Q4.2 340.5 0.0 340.5Q-4.1 340.4 -7.9 339.0Q-12.3 338.2 -16.3 336.2Q-17.7 333.2 -18.1 330.0Q-15.4 327.2 -12.0 325.4Q-10.8 322.5 -8.8 320.0Q-4.5 318.5 -0.0 318.3Q4.6 318.3 9.0 319.8Q11.4 322.1 13.0 325.1Q14.7 327.3 15.7 330.0M24.0 330.0Q26.0 335.2 26.3 340.8Q19.7 344.2 12.4 345.3Q6.4 347.3 0.0 347.3Q-6.2 347.1 -12.1 344.9Q-18.8 343.6 -24.9 340.2Q-27.1 335.3 -27.7 330.0Q-23.6 325.5 -18.4 322.4Q-16.6 317.6 -13.4 313.5Q-6.9 311.0 -0.0 310.6Q7.1 310.7 13.8 313.0Q17.5 317.0 19.9 321.8Q22.6 325.6 24.0 330.0M10.9 450.0Q12.0 451.6 12.5 453.5Q10.0 454.8 7.3 455.2Q4.7 455.8 2.0 455.5Q-0.5 455.6 -2.9 454.9Q-5.3 454.3 -7.4 453.1Q-8.9 451.7 -9.8 450.0Q-7.8 448.4 -5.5 447.5Q-4.5 446.0 -3.1 445.0Q-0.6 443.9 2.0 443.6Q4.8 443.7 7.5 444.6Q9.2 445.6 10.5 447.2Q11.0 448.6 10.9 450.0M18.1 450.0Q20.0 453.5 20.8 457.5Q16.4 460.2 11.5 461.4Q6.8 462.4 2.0 461.9Q-2.5 461.9 -6.8 460.5Q-11.2 459.3 -14.9 456.8Q-17.6 453.7 -19.2 450.0Q-15.7 446.7 -11.5 444.6Q-9.7 441.5 -7.1 439.0Q-2.8 436.9 2.0 436.1Q7.1 436.4 11.8 438.2Q15.0 440.6 17.3 443.9Q18.2 446.9 18.1 450.0M23.9 450.0Q26.6 455.1 27.6 460.8Q21.7 464.6 14.9 466.3Q8.5 467.7 2.0 467.1Q-4.1 467.1 -10.0 465.1Q-15.9 463.3 -21.0 459.7Q-24.7 455.3 -26.8 450.0Q-22.2 445.3 -16.3 442.3Q-14.0 437.8 -10.4 434.3Q-4.6 431.2 2.0 430.1Q8.9 430.5 15.4 433.1Q19.8 436.6 22.8 441.2Q24.1 445.5 23.9 450.0M34.5 450.0Q38.4 456.8 40.0 464.5Q31.2 469.7 21.2 471.9Q11.7 474.0 2.0 473.0Q-7.1 473.1 -15.8 470.3Q-24.6 468.0 -32.2 463.0Q-37.6 457.2 -40.8 450.0Q-33.8 443.6 -25.2 439.6Q-21.7 433.6 -16.5 428.9Q-7.7 424.6 2.0 423.3Q12.3 423.7 21.9 427.3Q28.3 431.9 33.0 438.2Q34.7 444.0 34.5 450.0M1003.8 180.0Q1003.8 181.2 1003.4 182.4Q1002.6 184.0 1001.3 185.1Q998.6 185.3 996.0 184.7Q993.9 184.7 991.8 184.1Q990.0 183.5 988.6 182.4Q987.1 181.4 986.0 180.0Q986.8 178.5 988.0 177.4Q990.1 176.6 992.3 176.4Q994.0 175.2 996.0 174.6Q998.4 174.6 1000.7 175.4Q1002.5 176.1 1004.0 177.4Q1004.1 178.7 1003.8 180.0M1012.9 180.0Q1012.9 182.8 1012.0 185.5Q1010.2 189.0 1007.3 191.8Q1001.6 192.1 996.0 190.7Q991.4 190.8 987.0 189.4Q983.2 188.0 980.0 185.5Q976.8 183.2 974.5 180.0Q976.2 176.7 978.8 174.0Q983.3 172.2 988.2 171.8Q991.7 169.1 996.0 167.7Q1001.2 167.8 1006.1 169.5Q1010.0 171.2 1013.2 174.1Q1013.5 177.0 1012.9 180.0M1020.8 180.0Q1020.9 184.8 1019.6 189.4Q1016.9 195.2 1012.7 199.9Q1004.2 200.3 996.0 198.1Q989.2 198.0 982.7 195.8Q977.1 193.4 972.4 189.4Q967.7 185.3 964.4 180.0Q966.8 174.5 970.7 169.9Q977.3 167.0 984.4 166.2Q989.7 161.8 996.0 159.2Q1003.7 159.5 1010.9 162.2Q1016.7 165.2 1021.3 170.0Q1021.9 175.0 1020.8 180.0M1027.3 180.0Q1027.4 185.8 1025.7 191.4Q1022.4 198.5 1017.0 204.2Q1006.3 204.8 996.0 202.0Q987.4 202.0 979.3 199.3Q972.1 196.4 966.3 191.4Q960.3 186.5 956.2 180.0Q959.1 173.2 964.1 167.7Q972.4 164.1 981.4 163.2Q988.0 157.7 996.0 154.6Q1005.7 154.9 1014.8 158.3Q1022.1 161.9 1027.9 167.7Q1028.6 173.9 1027.3 180.0M1007.1 300.0Q1007.8 301.4 1008.1 303.0Q1005.6 304.0 1002.8 304.2Q1000.4 304.8 998.0 304.7Q995.6 304.8 993.4 304.1Q990.9 303.8 988.5 302.8Q987.7 301.5 987.3 300.0Q989.0 298.7 991.0 297.9Q991.7 296.6 992.9 295.5Q995.4 294.7 998.0 294.7Q1000.7 294.6 1003.3 295.4Q1004.7 296.4 1005.7 297.8Q1006.6 298.8 1007.1 300.0M1013.1 300.0Q1014.5 303.1 1014.8 306.5Q1010.6 308.5 1006.0 309.2Q1002.1 310.4 998.0 310.3Q994.0 310.2 990.3 308.9Q986.0 308.1 982.2 306.0Q980.7 303.2 980.1 300.0Q982.8 297.3 986.3 295.5Q987.5 292.6 989.5 290.2Q993.6 288.6 998.0 288.4Q1002.5 288.4 1006.8 289.9Q1009.2 292.2 1010.8 295.1Q1012.4 297.4 1013.1 300.0M1024.2 300.0Q1026.6 305.3 1027.2 311.1Q1019.9 314.8 1011.9 315.9Q1005.1 318.0 998.0 317.8Q991.1 317.6 984.6 315.3Q977.3 314.0 970.7 310.4Q968.0 305.5 967.0 300.0Q971.7 295.3 977.6 292.2Q979.7 287.2 983.3 283.1Q990.4 280.4 998.0 280.0Q1005.8 280.0 1013.2 282.5Q1017.5 286.5 1020.2 291.5Q1022.9 295.4 1024.2 300.0M1008.0 420.0Q1006.8 422.1 1005.0 423.7Q1003.1 425.3 1000.9 426.1Q998.5 426.8 996.0 426.8Q993.2 427.3 990.4 426.9Q988.0 425.9 986.0 424.2Q986.3 422.0 987.4 420.0Q987.0 418.2 987.1 416.3Q988.6 414.5 990.6 413.3Q993.2 412.1 996.0 411.9Q998.6 412.6 1000.8 414.1Q1002.5 415.1 1003.8 416.7Q1006.2 418.0 1008.0 420.0M1017.7 420.0Q1015.4 423.3 1012.2 425.8Q1008.9 428.3 1004.9 429.5Q1000.5 430.7 996.0 430.5Q991.0 431.4 986.0 430.8Q981.6 429.3 977.9 426.5Q978.6 423.0 980.4 420.0Q979.7 417.2 980.0 414.3Q982.7 411.4 986.3 409.5Q991.0 407.7 996.0 407.4Q1000.6 408.4 1004.6 410.8Q1007.7 412.4 1010.2 414.9Q1014.3 416.9 1017.7 420.0M1027.6 420.0Q1024.3 424.9 1019.7 428.5Q1014.8 432.1 1009.0 434.0Q1002.6 435.7 996.0 435.4Q988.7 436.7 981.3 435.8Q975.0 433.6 969.6 429.5Q970.6 424.4 973.2 420.0Q972.2 415.9 972.6 411.6Q976.6 407.4 981.8 404.7Q988.6 402.0 996.0 401.6Q1002.7 403.0 1008.5 406.5Q1013.1 408.9 1016.7 412.6Q1022.7 415.4 1027.6 420.0M1035.6 420.0Q1031.6 427.2 1025.6 432.8Q1019.6 438.0 1012.3 441.0Q1004.3 443.3 996.0 443.1Q986.9 444.9 977.7 443.7Q969.5 440.2 962.9 434.3Q964.1 426.8 967.5 420.0Q966.1 413.7 966.7 407.4Q971.6 401.3 978.2 397.0Q986.7 393.2 996.0 392.3Q1004.4 394.7 1011.7 399.7Q1017.5 403.5 1021.9 408.8Q1029.6 413.3 1035.6 420.0M703.8 250.0Q703.1 251.7 701.8 253.1Q701.3 255.3 700.2 257.3Q697.6 257.9 695.0 257.7Q692.8 257.0 691.0 255.6Q689.0 254.9 687.3 253.6Q686.2 251.9 685.6 250.0Q685.5 247.9 686.0 245.8Q688.5 244.8 691.1 244.6Q692.9 243.5 695.0 243.1Q697.5 242.6 700.1 243.0Q701.8 244.4 703.1 246.3Q703.8 248.1 703.8 250.0M712.2 250.0Q710.7 253.1 708.2 255.6Q707.3 259.6 705.2 263.0Q700.1 264.2 695.0 263.8Q690.8 262.6 687.1 260.1Q683.3 258.8 680.0 256.4Q677.9 253.5 676.7 250.0Q676.5 246.2 677.5 242.5Q682.3 240.6 687.4 240.3Q691.0 238.3 695.0 237.5Q699.9 236.7 704.9 237.4Q708.3 239.9 710.7 243.3Q712.0 246.5 712.2 250.0M722.5 250.0Q719.9 254.2 716.1 257.4Q714.4 262.6 711.3 267.0Q703.2 268.8 695.0 268.0Q688.3 266.6 682.4 263.2Q676.4 261.7 671.1 258.4Q667.8 254.6 665.8 250.0Q665.7 245.0 667.1 240.2Q674.8 237.5 682.9 237.4Q688.7 234.6 695.0 233.7Q702.9 232.4 710.7 233.5Q716.0 236.6 720.1 241.2Q722.0 245.4 722.5 250.0M705.1 400.0Q704.2 401.4 702.8 402.5Q701.5 403.6 699.8 404.3Q698.0 404.9 696.0 404.9Q693.6 405.5 691.2 405.3Q690.0 404.1 689.2 402.5Q688.8 401.3 688.8 400.0Q688.5 398.7 688.7 397.3Q690.0 396.0 691.7 395.2Q693.8 394.5 696.0 394.4Q697.8 395.1 699.3 396.3Q701.4 396.5 703.3 397.3Q704.5 398.5 705.1 400.0M716.5 400.0Q714.4 403.1 711.3 405.4Q708.3 407.8 704.6 409.2Q700.4 410.5 696.0 410.5Q690.7 411.9 685.2 411.5Q682.4 408.8 680.7 405.4Q679.8 402.8 679.8 400.0Q679.2 397.1 679.6 394.2Q682.6 391.4 686.3 389.6Q691.0 388.0 696.0 387.9Q700.1 389.4 703.5 392.0Q708.2 392.4 712.5 394.1Q715.0 396.8 716.5 400.0M725.8 400.0Q722.7 404.7 718.3 408.2Q713.9 411.7 708.5 413.8Q702.4 415.7 696.0 415.7Q688.2 417.8 680.2 417.3Q676.3 413.2 673.8 408.1Q672.5 404.2 672.5 400.0Q671.6 395.7 672.1 391.3Q676.4 387.1 681.9 384.5Q688.7 382.1 696.0 381.9Q701.9 384.1 706.9 388.0Q713.7 388.6 720.0 391.2Q723.6 395.1 725.8 400.0" fill="none" stroke="#fff" stroke-opacity=".12" stroke-width="0.9"/></svg>
<!-- ===== header card ===== -->
<div class="card" style="left:5px;top:6.5px;width:987.5px;height:86.5px;box-shadow:0 1px 2px rgba(0,0,0,.12)"></div>
<div class="abs" style="left:5px;top:6.5px;width:987.5px;height:47.2px;background:#f3f3f3;border-radius:3px 3px 0 0;border-bottom:1px solid #dddbda"></div>
<div class="abs" style="left:15.6px;top:18.6px;width:23.6px;height:23.6px;border-radius:3px;background:#e9638c"></div>
<svg style="left:15.6px;top:18.6px" width="23.6" height="23.6" viewBox="0 0 24 24"><path fill="#fff" d="M3.5 6.6h11.6a.9.9 0 0 1 .9.9v9.2a.9.9 0 0 1-.9.9H3.5a.9.9 0 0 1-.9-.9V7.5a.9.9 0 0 1 .9-.9zM16 11.2l4-3.4c.5-.4 1-.2 1 .4v7.8c0 .6-.5.8-1 .4l-4-3.4z"/></svg>
<!-- button group -->
<div class="btn" style="left:784.3px;top:19.7px;width:198.8px;height:21.4px"></div>
<div class="abs" style="left:820.3px;top:20px;width:1px;height:21px;background:#d8d6d4"></div>
<div class="abs" style="left:871.6px;top:20px;width:1px;height:21px;background:#d8d6d4"></div>
<div class="abs" style="left:961px;top:20px;width:1px;height:21px;background:#d8d6d4"></div>
<svg style="left:967.8px;top:28px" width="7.6" height="5" viewBox="0 0 7.6 5"><path d="M0 0h7.6L3.8 5z" fill="#514f4d"/></svg>

<!-- ===== left card ===== -->
<div class="card" style="left:5px;top:104px;width:685.7px;height:420px"></div>
<div class="abs" style="left:17.7px;top:166.8px;width:7.6px;height:7.6px;background:#1b86e8;border:1px solid #1874cd"></div>
<div class="abs" style="left:17.7px;top:200.4px;width:7.6px;height:7.6px;background:#9050e9;border:1px solid #7a3fd0"></div>
<div class="hr" style="left:16px;top:238.8px;width:140.5px"></div>
<svg style="left:0;top:0" width="1000" height="501"><path d="M22.40 259.60L24.90 259.60M22.14 260.24L23.90 262.00M21.50 260.50L21.50 263.00M20.86 260.24L19.10 262.00M20.60 259.60L18.10 259.60M20.86 258.96L19.10 257.20M21.50 258.70L21.50 256.20M22.14 258.96L23.90 257.20" stroke="#3e3e3c" stroke-width="0.8" stroke-linecap="round" fill="none"/></svg>
<svg style="left:18.5px;top:282.3px" width="7.6" height="4.6" viewBox="0 0 7.6 4.6"><path d="M0.5 0.5L3.8 3.9L7.1 0.5" fill="none" stroke="#2b2826" stroke-width="1.1" stroke-linecap="round" stroke-linejoin="round"/></svg>
<svg style="left:18.2px;top:358.3px" width="7.6" height="4.6" viewBox="0 0 7.6 4.6"><path d="M0.5 0.5L3.8 3.9L7.1 0.5" fill="none" stroke="#2b2826" stroke-width="1.1" stroke-linecap="round" stroke-linejoin="round"/></svg>
<svg style="left:18.2px;top:408.3px" width="7.6" height="4.6" viewBox="0 0 7.6 4.6"><path d="M0.5 0.5L3.8 3.9L7.1 0.5" fill="none" stroke="#2b2826" stroke-width="1.1" stroke-linecap="round" stroke-linejoin="round"/></svg>
<div class="btn" style="left:22.1px;top:297.7px;width:63.7px;height:21px"></div>
<div class="btn" style="left:22.1px;top:324.5px;width:56.4px;height:21px"></div>
<div class="btn" style="left:22.1px;top:374.3px;width:111.3px;height:21.2px"></div>
<div class="abs" style="left:22.7px;top:423.9px;width:60.4px;height:20.8px;background:#0f69d6;border-radius:3px"></div>
<div class="btn" style="left:22.7px;top:450.4px;width:75.5px;height:21.2px"></div>
<div class="btn" style="left:22.7px;top:477.4px;width:72.1px;height:21.2px"></div>

<!-- ===== video ===== -->
<div class="abs" style="left:168.2px;top:124.5px;width:507.7px;height:289.7px;background:#000;border-radius:3px"></div>
<div class="abs" style="left:420.7px;top:125px;width:2.4px;height:237px;background:#1d1d1d"></div>

<svg style="left:0;top:0" width="1000" height="501">
 <defs>
  <clipPath id="cw"><circle cx="294.2" cy="253" r="64"/></clipPath>
  <clipPath id="cm"><circle cx="550.3" cy="253.5" r="64"/></clipPath>
  <filter id="b1" x="-20%" y="-20%" width="140%" height="140%"><feGaussianBlur stdDeviation="1.1"/></filter>
  <filter id="b2" x="-20%" y="-20%" width="140%" height="140%"><feGaussianBlur stdDeviation="2.2"/></filter>
  <filter id="b05" x="-20%" y="-20%" width="140%" height="140%"><feGaussianBlur stdDeviation="0.55"/></filter>
  <radialGradient id="skinw" cx="0.55" cy="0.45" r="0.65"><stop offset="0" stop-color="#ecb48c"/><stop offset="0.6" stop-color="#d89a72"/><stop offset="1" stop-color="#a96f4d"/></radialGradient>
  <radialGradient id="skinm" cx="0.5" cy="0.35" r="0.7"><stop offset="0" stop-color="#efb98e"/><stop offset="0.6" stop-color="#d99c73"/><stop offset="1" stop-color="#a06f52"/></radialGradient>
  <linearGradient id="hairw" x1="0" y1="0" x2="1" y2="0.6"><stop offset="0" stop-color="#3f2917"/><stop offset="0.3" stop-color="#8a5f3b"/><stop offset="0.6" stop-color="#c79c6c"/><stop offset="1" stop-color="#6d4a2d"/></linearGradient>
 </defs>
 <!-- ===== woman ===== -->
 <g clip-path="url(#cw)">
  <rect x="228" y="187" width="134" height="134" fill="#f3b7c3"/>
  <!-- clothing -->
  <path d="M224 322L232 306Q246 299 262 297L284 294Q300 301 320 293L336 298Q352 303 360 312L364 322z" fill="#0d111b" filter="url(#b1)"/>
  <!-- neck -->
  <path d="M283 280L283 293Q300 303 320 291L320 278z" fill="#c28a66" filter="url(#b1)"/>
  <!-- ear -->
  <ellipse cx="257.5" cy="252" rx="4.5" ry="8.5" fill="#cf9069" filter="url(#b05)"/>
  <!-- face -->
  <path d="M259 238Q258 264 269 281Q285 299 303 298Q322 297 332.5 278Q340 260 337 232Q333 212 300 212Q264 214 259 238z" fill="url(#skinw)" filter="url(#b05)"/>
  <!-- cheek shading -->
  <ellipse cx="281" cy="262" rx="9" ry="12" fill="#d6946f" opacity=".55" filter="url(#b2)"/>
  <ellipse cx="329" cy="258" rx="5" ry="12" fill="#c98a66" opacity=".6" filter="url(#b2)"/>
  <!-- hair -->
  <path d="M247.5 243Q239 224 248 205Q258 189 284 186.5Q314 183 332 197Q342 207 340 224L336 237Q335 220 323 217Q300 215 284 227Q270 237 262 241Q256 247 247.5 243z" fill="url(#hairw)" filter="url(#b05)"/>
  <path d="M250 241Q244 222 254 205Q266 192 280 190Q268 204 262 222Q262 236 266 240z" fill="#4a2f1c" opacity=".75" filter="url(#b1)"/><path d="M300 200Q318 204 334 216" stroke="#6b4a2e" stroke-width="3" fill="none" opacity=".6" filter="url(#b1)"/>
  <path d="M262 212Q282 196 312 198" stroke="#e0bc8c" stroke-width="3" fill="none" opacity=".7" filter="url(#b1)"/>
  <path d="M249 232Q256 241 264 238.5Q279 231.5 294 222.5Q315 214.5 335.5 216.5L336 211Q314 208.5 292 216.5Q276 224.5 262 231.5Q255 233.5 250 225z" fill="#38220f" opacity=".62" filter="url(#b1)"/>
  <path d="M332 205Q300 195 266 224M318 196Q288 191 255 222" stroke="#5a3a1f" stroke-width="1.6" fill="none" opacity=".55" filter="url(#b05)"/>
  <path d="M326 200Q295 192 260 223M306 192Q278 192 252 214" stroke="#e6c596" stroke-width="1.5" fill="none" opacity=".55" filter="url(#b05)"/>
  <!-- brows / eyes -->
  <path d="M284 229Q291 225.5 298 228" stroke="#4a3325" stroke-width="1.6" fill="none" filter="url(#b05)"/>
  <path d="M313 226.5Q320 224 327 227" stroke="#4a3325" stroke-width="1.6" fill="none" filter="url(#b05)"/>
  <path d="M284.5 236Q291 231.8 298 236.4Q291 239 284.5 236z" fill="#1a100c" filter="url(#b05)"/>
  <path d="M314 234.8Q320.5 230.8 327 234.4Q320.5 237.6 314 234.8z" fill="#1a100c" filter="url(#b05)"/>
  <path d="M270 276Q286 297 304 297Q322 296 333 276Q326 292 304 300Q284 298 270 276z" fill="#9a6243" opacity=".55" filter="url(#b1)"/>
  <path d="M287 258Q283 266 287 274M322 256Q326 264 322 272" stroke="#b87a58" stroke-width="1.2" fill="none" opacity=".8" filter="url(#b05)"/>
  <!-- nose -->
  <path d="M302 252Q306 258 312 252" stroke="#b77a58" stroke-width="1.6" fill="none" filter="url(#b05)"/>
  <!-- mouth -->
  <path d="M289.5 266.5Q304 269 319.5 265.5Q316 278 304.5 278.5Q293 278 289.5 266.5z" fill="#8c1d2c" filter="url(#b05)"/>
  <path d="M293 268Q304.5 270 316.5 267.3Q314.5 272.5 304.5 273Q295.5 272.8 293 268z" fill="#f4ede8" filter="url(#b05)"/>
  <!-- earrings -->
  <rect x="256.2" y="261" width="4.4" height="33" rx="1.6" fill="#c9cdd0" filter="url(#b05)"/>
  <rect x="257.4" y="268" width="2" height="20" fill="#80868c" opacity=".7"/>
  <rect x="323.6" y="281" width="2.6" height="9.5" rx="1.2" fill="#e3e6e8" filter="url(#b05)"/>
 </g>
 <!-- ===== man ===== -->
 <g clip-path="url(#cm)">
  <rect x="484" y="187" width="134" height="134" fill="#fba50e"/>
  <!-- shirt -->
  <path d="M505 322L511 304L527 292L541 300L556 307L573 299L584 290L598 302L606 322z" fill="#40709f" filter="url(#b1)"/>
  <path d="M527 292L541 300L556 307L548 318L530 312z" fill="#2f5a86" opacity=".8" filter="url(#b1)"/>
  <path d="M584 290L573 299L556 307L566 318L582 310z" fill="#35628f" opacity=".8" filter="url(#b1)"/>
  <!-- neck -->
  <path d="M534 282L534 296Q555 312 578 294L578 280z" fill="#a9775a" filter="url(#b1)"/>
  <!-- ears -->
  <ellipse cx="520.5" cy="247" rx="4" ry="8.5" fill="#c48a66" filter="url(#b05)"/>
  <ellipse cx="590.8" cy="247" rx="4" ry="8.5" fill="#c48a66" filter="url(#b05)"/>
  <!-- hair back -->
  <path d="M518.5 242Q511 210 525 196Q540 186 556 187Q578 186 590 200Q599 216 592.5 244L588 232Q586 212 568 206L544 206Q527 212 524 232z" fill="#4a4540" filter="url(#b05)"/>
  <path d="M518.8 240Q515 222 520 208L526 206Q523 222 524 236z" fill="#7d766f" opacity=".85" filter="url(#b05)"/><path d="M592.4 242Q596.5 222 591 207L585 205Q588 222 588 236z" fill="#7d766f" opacity=".85" filter="url(#b05)"/>
  <!-- face -->
  <path d="M523 232Q521 262 529 281Q540 302 556 302.5Q572 302 583 281Q591 262 588 232Q586 202 556 201Q526 202 523 232z" fill="url(#skinm)" filter="url(#b05)"/>
  <!-- hair top over forehead -->
  <path d="M520 228Q519 202 533 194Q556 183 579 194Q593 204 591 230Q587 211 575 206Q556 201 540 205Q526 209 520 228z" fill="#4d4842" filter="url(#b05)"/>
  <path d="M530 201Q552 191 580 201" stroke="#7a736b" stroke-width="2.6" fill="none" opacity=".7" filter="url(#b1)"/><ellipse cx="556" cy="222" rx="16" ry="7" fill="#f0bc92" opacity=".55" filter="url(#b2)"/>
  <ellipse cx="537" cy="253" rx="7" ry="5" fill="#f3bf98" opacity=".5" filter="url(#b2)"/><ellipse cx="572" cy="253" rx="7" ry="5" fill="#f3bf98" opacity=".5" filter="url(#b2)"/>
  <!-- beard stubble -->
  <path d="M524.5 258Q526 282 537 294Q547 303 556 303Q566 303 575.5 294Q586 282 587.5 258Q582 270 571 274L541 274Q531 270 524.5 258z" fill="#6f4f3d" opacity=".85" filter="url(#b1)"/>
  <path d="M543 280Q556 284 569 280L566 292Q556 298 546 292z" fill="#6a4c3c" opacity=".6" filter="url(#b1)"/>
  <!-- brows / eyes -->
  <path d="M531 232.5Q539 228.6 547 231.6" stroke="#3a2c24" stroke-width="2" fill="none" filter="url(#b05)"/>
  <path d="M563 231.6Q571 228.6 579 232.5" stroke="#3a2c24" stroke-width="2" fill="none" filter="url(#b05)"/>
  <path d="M532.5 238.6Q539 234.8 545.5 239Q539 241.4 532.5 238.6z" fill="#1d130e" filter="url(#b05)"/>
  <path d="M563 239Q569.5 234.8 576 238.6Q569.5 241.4 563 239z" fill="#1d130e" filter="url(#b05)"/>
  <!-- nose -->
  <path d="M547.6 256.5Q553.6 261.5 559.6 256.5" stroke="#a87355" stroke-width="1.8" fill="none" filter="url(#b05)"/>
  <!-- mustache -->
  <path d="M528.4 268Q533 261 542.6 260.5Q550 259.5 553.6 262.5Q557.2 259.5 564.6 260.5Q574 261 578.8 268.5Q580 273 575.2 276Q568 274.5 562.6 271.5Q557.2 269.6 553.6 271Q550 269.6 544.6 271.5Q539 274.5 531.6 276Q527 273 528.4 268z" fill="#2a201b" filter="url(#b05)"/>
  <!-- lower lip -->
  <path d="M544.6 274Q553.6 279 562.6 274" stroke="#a9665a" stroke-width="1.6" fill="none" opacity=".8" filter="url(#b05)"/>
 </g>
</svg>


<svg style="left:0;top:0" width="1000" height="501">
 <!-- play -->
 <path d="M182.3 376.5L195.3 383.2L182.3 389.9z" fill="#fff"/>
 <!-- rewind -->
 <path d="M225.26 379.64A4.0 4.0 0 1 1 222.30 383.80" fill="none" stroke="#fff" stroke-width="1.7"/><path d="M222.37 380.41L225.20 377.07L226.49 381.90z" fill="#fff"/>
 <path d="M242.84 379.64A4.0 4.0 0 1 0 245.80 383.80" fill="none" stroke="#fff" stroke-width="1.7"/><path d="M245.73 380.41L242.90 377.07L241.61 381.90z" fill="#fff"/>
 <!-- arrows -->
 <g fill="none" stroke="#fff" stroke-width="2.3" stroke-linecap="butt" stroke-linejoin="miter">
  <path d="M411.2 383.3H400.4M404.6 378.6L399.9 383.3L404.6 388"/>
  <path d="M431.4 383.3H442.2M438 378.6L442.7 383.3L438 388"/>
 </g>
 <!-- caret -->
 <path d="M603.4 381.2h7.2l-3.6 4.8z" fill="#fff"/>
 <!-- volume -->
 <path d="M623.1 380.2h3.1l4.5-4.6v14l-4.5-4.6h-3.1z" fill="#fff"/>
 <path d="M632.3 379.8a4.4 4.4 0 0 1 0 6" fill="none" stroke="#fff" stroke-width="1.25"/>
 <path d="M634.3 377.4a7.6 7.6 0 0 1 0 10.8" fill="none" stroke="#fff" stroke-width="1.35"/>
 <!-- fullscreen: four arrows pointing at the corners -->
 <g fill="#fff">
  <path d="M647.4 376.7h6.1l-6.1 6.1z"/><path d="M661.1 376.7h-6.1l6.1 6.1z"/>
  <path d="M647.4 390.1h6.1l-6.1-6.1z"/><path d="M661.1 390.1h-6.1l6.1-6.1z"/>
 </g>
 <g stroke="#fff" stroke-width="2.5" fill="none">
  <path d="M649.4 378.7L653 382.2M659.1 378.7L655.5 382.2M649.4 388.1L653 384.6M659.1 388.1L655.5 384.6"/>
 </g>
 <!-- progress -->
 <rect x="183" y="399.7" width="478.5" height="2.4" rx="1.2" fill="#9d9d9d"/>
 <rect x="183" y="399.7" width="106.5" height="2.4" rx="1.2" fill="#c9c9c9"/>
 <circle cx="289.5" cy="400.9" r="3.7" fill="#fff"/>
</svg>
<svg style="left:0;top:0" width="1000" height="501"><path d="M422.10 383.30L424.90 383.30M421.95 383.65L423.93 385.63M421.60 383.80L421.60 386.60M421.25 383.65L419.27 385.63M421.10 383.30L418.30 383.30M421.25 382.95L419.27 380.97M421.60 382.80L421.60 380.00M421.95 382.95L423.93 380.97" stroke="#c4c4c4" stroke-width="1.1" stroke-linecap="round" fill="none"/></svg>
<!-- ===== timeline ===== -->
<div class="abs" style="left:168.2px;top:414px;width:507.7px;height:41.8px;background:#f3f2f2;border-radius:0 0 4px 4px"></div>
<div class="abs" style="left:183.5px;top:438.6px;width:477.5px;height:7.2px;background:#fff"></div>
<div class="abs" style="left:183.5px;top:479.5px;width:477.5px;height:10px;background:#eef5fb"></div>
<svg style="left:0;top:0" width="1000" height="501">
<circle cx="203.5" cy="442.1" r="2.5" fill="#d3ebe8"/>
<circle cx="222.25" cy="442.1" r="2.5" fill="#d3ebe8"/>
<circle cx="235.25" cy="442.1" r="2.5" fill="#d3ebe8"/>
<circle cx="280.5" cy="442.1" r="2.5" fill="#d3ebe8"/>
<circle cx="326.75" cy="442.1" r="2.5" fill="#d3ebe8"/>
<circle cx="430" cy="442.1" r="2.5" fill="#d3ebe8"/>
<circle cx="479.5" cy="442.1" r="2.5" fill="#d3ebe8"/>
<circle cx="502.25" cy="442.1" r="2.5" fill="#d3ebe8"/>
<circle cx="517.5" cy="442.1" r="2.5" fill="#d3ebe8"/>
<circle cx="602.25" cy="442.1" r="2.5" fill="#d3ebe8"/>
<circle cx="608.75" cy="442.1" r="2.5" fill="#d3ebe8"/>
<circle cx="634.5" cy="442.1" r="2.5" fill="#d3ebe8"/>
<circle cx="289.5" cy="442.1" r="2.3" fill="#1f9a93" stroke="#137a75" stroke-width="0.6"/>
<circle cx="357.75" cy="442.1" r="2.3" fill="#1f9a93" stroke="#137a75" stroke-width="0.6"/>
<circle cx="388.75" cy="442.1" r="2.3" fill="#1f9a93" stroke="#137a75" stroke-width="0.6"/>
<circle cx="404.25" cy="442.1" r="2.3" fill="#1f9a93" stroke="#137a75" stroke-width="0.6"/>
<circle cx="424.25" cy="442.1" r="2.3" fill="#1f9a93" stroke="#137a75" stroke-width="0.6"/>
<circle cx="439.75" cy="442.1" r="2.3" fill="#1f9a93" stroke="#137a75" stroke-width="0.6"/>
<circle cx="584.5" cy="442.1" r="2.3" fill="#1f9a93" stroke="#137a75" stroke-width="0.6"/>
<circle cx="644.25" cy="442.1" r="2.3" fill="#1f9a93" stroke="#137a75" stroke-width="0.6"/>
<rect x="183.5" y="479.6" width="7.50" height="9.8" fill="#9a55ee" stroke="#7b3fd0" stroke-width="0.5"/>
<rect x="204.5" y="479.6" width="12.75" height="9.8" fill="#9a55ee" stroke="#7b3fd0" stroke-width="0.5"/>
<rect x="263" y="479.6" width="4.00" height="9.8" fill="#9a55ee" stroke="#7b3fd0" stroke-width="0.5"/>
<rect x="297.5" y="479.6" width="21.25" height="9.8" fill="#9a55ee" stroke="#7b3fd0" stroke-width="0.5"/>
<rect x="378.5" y="479.6" width="9.50" height="9.8" fill="#9a55ee" stroke="#7b3fd0" stroke-width="0.5"/>
<rect x="404.25" y="479.6" width="9.75" height="9.8" fill="#9a55ee" stroke="#7b3fd0" stroke-width="0.5"/>
<rect x="423" y="479.6" width="17.00" height="9.8" fill="#9a55ee" stroke="#7b3fd0" stroke-width="0.5"/>
<rect x="451" y="479.6" width="16.25" height="9.8" fill="#9a55ee" stroke="#7b3fd0" stroke-width="0.5"/>
<rect x="471.75" y="479.6" width="3.75" height="9.8" fill="#9a55ee" stroke="#7b3fd0" stroke-width="0.5"/>
<rect x="530.5" y="479.6" width="10.25" height="9.8" fill="#9a55ee" stroke="#7b3fd0" stroke-width="0.5"/>
<rect x="569.25" y="479.6" width="5.00" height="9.8" fill="#9a55ee" stroke="#7b3fd0" stroke-width="0.5"/>
<rect x="601" y="479.6" width="31.00" height="9.8" fill="#9a55ee" stroke="#7b3fd0" stroke-width="0.5"/>
<rect x="647" y="479.6" width="13.50" height="9.8" fill="#9a55ee" stroke="#7b3fd0" stroke-width="0.5"/>
<rect x="218.9" y="465" width="0.8" height="9.5" fill="#dddbda"/>
</svg>

<!-- ===== right card ===== -->
<div class="card" style="left:700.4px;top:103.6px;width:292.1px;height:420px"></div>
<div class="hr" style="left:700.4px;top:130.2px;width:292.1px"></div>
<div class="abs" style="left:700.4px;top:129.5px;width:58.2px;height:1.9px;background:#2f74d0"></div>
<div class="abs" style="left:702.5px;top:135.8px;width:286.5px;height:121.6px;background:#ecf3fe"></div>
<div class="abs" style="left:702.5px;top:135.8px;width:1.7px;height:121.6px;background:#2468cf"></div>
<div class="tag" style="left:716.4px;top:168.6px;width:43px;height:17.4px"></div>
<div class="tag" style="left:765.4px;top:168.6px;width:48.2px;height:17.4px"></div>
<div class="tag" style="left:716.4px;top:290.8px;width:43px;height:17.4px"></div>
<div class="hr" style="left:704.5px;top:352.2px;width:284.5px"></div>
<div class="tag" style="left:716.4px;top:385.4px;width:31px;height:17.2px"></div>
<div class="tag" style="left:753.1px;top:385.4px;width:45.9px;height:17.2px"></div>
<div class="hr" style="left:704.5px;top:458.6px;width:284.5px"></div>
<div class="tag" style="left:716.4px;top:493.4px;width:43px;height:17.4px"></div>

<div style="position:absolute;left:0;top:0;width:1000px;height:501px;will-change:transform">
<span class="t" style="left:48.20px;top:20.10px;font-size:8.2px;line-height:8.2px;color:#514f4d;transform:scaleX(1.0310);">Video Record</span>
<span class="t" style="left:48.20px;top:33.10px;font-size:11.4px;line-height:11.4px;color:#080707;font-weight:bold;transform:scaleX(1.0605);">Meeting with Globex Corp</span>
<span class="t" style="left:794.80px;top:28.10px;font-size:8.2px;line-height:8.2px;color:#2f6fce;transform:scaleX(1.0135);">Edit</span>
<span class="t" style="left:831.60px;top:28.10px;font-size:8.2px;line-height:8.2px;color:#2f6fce;transform:scaleX(1.0200);">Sharing</span>
<span class="t" style="left:882.20px;top:28.10px;font-size:8.2px;line-height:8.2px;color:#2f6fce;transform:scaleX(1.0936);">Add to Collection</span>
<span class="t" style="left:15.40px;top:67.11px;font-size:7.6px;line-height:7.6px;color:#6b6967;transform:scaleX(1.0719);">Date</span>
<span class="t" style="left:150.90px;top:67.11px;font-size:7.6px;line-height:7.6px;color:#6b6967;transform:scaleX(1.1149);">Duration</span>
<span class="t" style="left:234.70px;top:67.11px;font-size:7.6px;line-height:7.6px;color:#6b6967;transform:scaleX(1.0689);">Related Record</span>
<span class="t" style="left:370.30px;top:67.11px;font-size:7.6px;line-height:7.6px;color:#6b6967;transform:scaleX(1.0158);">User</span>
<span class="t" style="left:15.40px;top:79.10px;font-size:8.8px;line-height:8.8px;color:#181818;transform:scaleX(1.1312);-webkit-text-stroke:0.08px #181818;">8/18/2021 9:28 am</span>
<span class="t" style="left:150.90px;top:79.10px;font-size:8.8px;line-height:8.8px;color:#181818;transform:scaleX(1.0720);-webkit-text-stroke:0.08px #181818;">07:14</span>
<span class="t" style="left:234.70px;top:79.10px;font-size:8.8px;line-height:8.8px;color:#181818;transform:scaleX(1.0335);-webkit-text-stroke:0.08px #181818;">John Klessen</span>
<span class="t" style="left:370.30px;top:79.10px;font-size:8.8px;line-height:8.8px;color:#181818;-webkit-text-stroke:0.08px #181818;">Aarya Li</span>
<span class="t" style="left:16.50px;top:115.10px;font-size:11.4px;line-height:11.4px;color:#080707;transform:scaleX(1.1449);-webkit-text-stroke:0.15px #080707;">Meeting playback</span>
<span class="t" style="left:17.80px;top:146.10px;font-size:8.8px;line-height:8.8px;color:#080707;transform:scaleX(1.1530);-webkit-text-stroke:0.1px #080707;">Participants</span>
<span class="t" style="left:30.20px;top:167.10px;font-size:8.2px;line-height:8.2px;color:#181818;transform:scaleX(1.0442);">Globex Corp</span>
<span class="t" style="left:17.50px;top:182.10px;font-size:8.2px;line-height:8.2px;color:#2f6fce;">John Klessen</span>
<span class="t" style="left:30.20px;top:201.10px;font-size:8.2px;line-height:8.2px;color:#181818;transform:scaleX(1.0529);">SmartBytes (host)</span>
<span class="t" style="left:17.50px;top:216.11px;font-size:8.2px;line-height:8.2px;color:#2f6fce;">Aarya Li</span>
<span class="t" style="left:31.30px;top:255.11px;font-size:8.8px;line-height:8.8px;color:#080707;transform:scaleX(1.1573);-webkit-text-stroke:0.1px #080707;">Insights</span>
<span class="t" style="left:32.00px;top:281.11px;font-size:8.2px;line-height:8.2px;color:#181818;transform:scaleX(1.0811);">Competitors (2)</span>
<span class="t" style="left:32.90px;top:305.11px;font-size:8.2px;line-height:8.2px;color:#2f6fce;transform:scaleX(1.0216);">Firewire (2)</span>
<span class="t" style="left:32.90px;top:332.11px;font-size:8.2px;line-height:8.2px;color:#2f6fce;transform:scaleX(1.0344);">Mcafs (2)</span>
<span class="t" style="left:31.30px;top:357.10px;font-size:8.2px;line-height:8.2px;color:#181818;transform:scaleX(1.0540);">Products (1)</span>
<span class="t" style="left:32.90px;top:383.10px;font-size:8.2px;line-height:8.2px;color:#2f6fce;transform:scaleX(1.0986);">Application Monitor (5)</span>
<span class="t" style="left:31.30px;top:407.10px;font-size:8.2px;line-height:8.2px;color:#181818;transform:scaleX(1.0923);">Automatic Insights (3)</span>
<span class="t" style="left:33.50px;top:432.11px;font-size:8.2px;line-height:8.2px;color:#fff;transform:scaleX(1.0425);-webkit-text-stroke:0.2px #fff;">Pricing (8)</span>
<span class="t" style="left:33.70px;top:459.11px;font-size:8.2px;line-height:8.2px;color:#2f6fce;transform:scaleX(1.0262);">Next Steps (1)</span>
<span class="t" style="left:33.70px;top:485.10px;font-size:8.2px;line-height:8.2px;color:#2f6fce;transform:scaleX(1.0294);">Challenge (6)</span>
<span class="t" style="left:276.70px;top:329.10px;font-size:8.2px;line-height:8.2px;color:#c4c2c0;transform:scaleX(1.0983);">Aarya Li</span>
<span class="t" style="left:522.80px;top:329.10px;font-size:8.2px;line-height:8.2px;color:#c4c2c0;transform:scaleX(1.1592);">John Klessen</span>
<span class="t" style="left:208.80px;top:384.11px;font-size:6.4px;line-height:6.4px;color:#fff;font-weight:bold;transform:scaleX(1.0682);-webkit-text-stroke:0.25px #fff;">15s</span>
<span class="t" style="left:247.90px;top:384.11px;font-size:6.4px;line-height:6.4px;color:#fff;font-weight:bold;transform:scaleX(1.0120);-webkit-text-stroke:0.25px #fff;">15s</span>
<span class="t" style="left:269.80px;top:380.10px;font-size:9.8px;line-height:9.8px;color:#fff;transform:scaleX(1.0779);-webkit-text-stroke:0.3px #fff;">01:02/35:24</span>
<span class="t" style="left:587.80px;top:378.11px;font-size:11px;line-height:11px;color:#fff;transform:scaleX(1.0065);-webkit-text-stroke:0.45px #fff;">1x</span>
<span class="t" style="left:183.50px;top:424.10px;font-size:8.2px;line-height:8.2px;color:#181818;transform:scaleX(1.0879);-webkit-text-stroke:0.2px #181818;">Insights</span>
<span class="t" style="left:183.50px;top:467.10px;font-size:8.2px;line-height:8.2px;color:#181818;transform:scaleX(1.0051);-webkit-text-stroke:0.2px #181818;">Aarya Li</span>
<span class="t" style="left:225.50px;top:467.10px;font-size:8.2px;line-height:8.2px;color:#706e6b;transform:scaleX(0.9861);">Sales Representative</span>
<span class="t" style="left:643.00px;top:467.10px;font-size:8.2px;line-height:8.2px;color:#706e6b;transform:scaleX(1.0372);">63%</span>
<span class="t" style="left:709.40px;top:114.10px;font-size:8.8px;line-height:8.8px;color:#080707;font-weight:bold;transform:scaleX(0.9542);">Transcript</span>
<span class="t" style="left:766.60px;top:114.10px;font-size:9.1px;line-height:9.1px;color:#514f4d;transform:scaleX(0.9387);">Chatter</span>
<span class="t" style="left:811.40px;top:114.10px;font-size:9.1px;line-height:9.1px;color:#514f4d;transform:scaleX(0.9210);">Details</span>
<span class="t" style="left:853.60px;top:114.10px;font-size:9.1px;line-height:9.1px;color:#514f4d;transform:scaleX(0.9184);">Related</span>
<span class="t" style="left:716.60px;top:151.10px;font-size:8.8px;line-height:8.8px;color:#080707;font-weight:bold;transform:scaleX(0.8881);">John Klessen</span>
<span class="t" style="left:773.00px;top:151.10px;font-size:8.8px;line-height:8.8px;color:#514f4d;transform:scaleX(0.9051);">00:01:02</span>
<span class="t" style="left:719.00px;top:174.10px;font-size:8.8px;line-height:8.8px;color:#2f6fce;transform:scaleX(0.9378);">Pricing (2)</span>
<span class="t" style="left:767.80px;top:174.10px;font-size:8.8px;line-height:8.8px;color:#2f6fce;transform:scaleX(0.9853);">Competitor</span>
<span class="t" style="left:715.90px;top:197.11px;font-size:9.1px;line-height:9.1px;color:#3e3e3c;transform:scaleX(0.9290);">Oh okay. That’s a more expensive offer than what Mcafs gave us.</span>
<span class="t" style="left:715.90px;top:210.10px;font-size:9.1px;line-height:9.1px;color:#3e3e3c;transform:scaleX(0.9313);">They offered us $60 a month and it’s not based on users. Is there</span>
<span class="t" style="left:715.90px;top:224.10px;font-size:9.1px;line-height:9.1px;color:#3e3e3c;transform:scaleX(0.9501);">any way that you can lower your offer to be closer to what they</span>
<span class="t" style="left:715.90px;top:237.10px;font-size:9.1px;line-height:9.1px;color:#3e3e3c;transform:scaleX(0.9263);">offered us?</span>
<span class="t" style="left:716.40px;top:273.10px;font-size:8.8px;line-height:8.8px;color:#080707;font-weight:bold;transform:scaleX(0.9416);">Aariya Li</span>
<span class="t" style="left:756.40px;top:273.10px;font-size:8.8px;line-height:8.8px;color:#514f4d;transform:scaleX(0.8934);">00:01:14</span>
<span class="t" style="left:719.00px;top:296.11px;font-size:8.8px;line-height:8.8px;color:#2f6fce;transform:scaleX(0.9378);">Pricing (2)</span>
<span class="t" style="left:715.90px;top:320.11px;font-size:9.1px;line-height:9.1px;color:#3e3e3c;transform:scaleX(0.9434);">I can’t change the monthly price, but what I can do is provide a</span>
<span class="t" style="left:715.90px;top:333.10px;font-size:9.1px;line-height:9.1px;color:#3e3e3c;transform:scaleX(0.9442);">discount of 25%.</span>
<span class="t" style="left:716.40px;top:367.10px;font-size:8.8px;line-height:8.8px;color:#080707;font-weight:bold;transform:scaleX(0.8916);">John Klessen</span>
<span class="t" style="left:773.00px;top:367.10px;font-size:8.8px;line-height:8.8px;color:#514f4d;transform:scaleX(0.9051);">00:01:26</span>
<span class="t" style="left:719.00px;top:391.10px;font-size:8.8px;line-height:8.8px;color:#2f6fce;transform:scaleX(0.9594);">Pricing</span>
<span class="t" style="left:756.10px;top:391.10px;font-size:8.8px;line-height:8.8px;color:#2f6fce;transform:scaleX(0.9296);">Next Steps</span>
<span class="t" style="left:715.90px;top:414.11px;font-size:9.1px;line-height:9.1px;color:#3e3e3c;transform:scaleX(0.9480);">Ok that sounds a bit more manageable. It’s definitely not anything</span>
<span class="t" style="left:715.90px;top:427.11px;font-size:9.1px;line-height:9.1px;color:#3e3e3c;transform:scaleX(0.9482);">final but knowing pricing is a good first step. Could you send me</span>
<span class="t" style="left:715.90px;top:440.10px;font-size:9.1px;line-height:9.1px;color:#3e3e3c;transform:scaleX(0.9376);">all of this in an email?</span>
<span class="t" style="left:716.40px;top:476.11px;font-size:8.8px;line-height:8.8px;color:#080707;font-weight:bold;transform:scaleX(0.9416);">Aariya Li</span>
<span class="t" style="left:756.40px;top:476.11px;font-size:8.8px;line-height:8.8px;color:#514f4d;transform:scaleX(0.8934);">00:01:32</span>
<span class="t" style="left:719.00px;top:498.10px;font-size:8.8px;line-height:8.8px;color:#2f6fce;transform:scaleX(0.9378);">Pricing (2)</span>
</div>
<div class="abs" style="left:288.5px;top:414px;width:2px;height:87px;background:rgba(95,95,95,.5)"></div>
</body>
</html>
